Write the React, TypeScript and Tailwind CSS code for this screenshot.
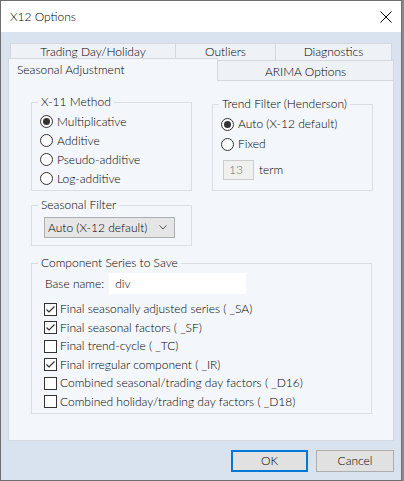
import React from 'react';

const panelBg = 'bg-[#f3f6fa]';

const Radio = ({ checked, label }: { checked?: boolean; label: string }) => (
  <div className="flex items-center h-[20px] gap-[4px]">
    <span className="w-[13px] h-[13px] rounded-full border border-[#333333] bg-white flex items-center justify-center">
      {checked && <span className="w-[7px] h-[7px] rounded-full bg-[#333333]" />}
    </span>
    <span>{label}</span>
  </div>
);

const Check = ({ checked, label }: { checked?: boolean; label: string }) => (
  <div className="flex items-center h-[18.5px] gap-[3px]">
    <span className="w-[13px] h-[13px] border border-[#333333] bg-white flex items-center justify-center">
      {checked && (
        <svg width="11" height="11" viewBox="0 0 11 11">
          <path d="M1.5 5.5 L4 8 L9.5 2.5" fill="none" stroke="#333333" strokeWidth="1.2" />
        </svg>
      )}
    </span>
    <span>{label}</span>
  </div>
);

const GroupLabel = ({ children }: { children: React.ReactNode }) => (
  <div className={`-mt-[9px] ml-[6px] px-[3px] w-fit leading-[16px] ${panelBg}`}>{children}</div>
);

export default function App() {
  return (
    <div className="w-[404px] h-[481px] bg-[#8a8a8a]">
      <div className="w-[402px] h-[481px] border border-[#6e6e6e] flex flex-col font-['Lato',sans-serif] font-light text-[12px] text-black">
        {/* Title bar */}
        <div className="h-[31px] bg-white flex items-center justify-between pl-[9px] pr-[9px]">
          <span>X12 Options</span>
          <svg width="12" height="12" viewBox="0 0 12 12">
            <path d="M0.5 0.5 L11.5 11.5 M11.5 0.5 L0.5 11.5" stroke="#000" strokeWidth="1" />
          </svg>
        </div>

        {/* Body */}
        <div className="flex-1 bg-[#d9e3f0] pt-[11px] pl-[7px] pr-[7px] flex flex-col">
          {/* Tabs row 1 */}
          <div className="flex h-[17px] ml-[2px]">
            <div className="w-[165px] border-t border-l border-[#d4d7db] bg-[#eef1f5] flex items-center justify-center">Trading Day/Holiday</div>
            <div className="w-[100px] border-t border-l border-[#d4d7db] bg-[#eef1f5] flex items-center justify-center">Outliers</div>
            <div className="w-[117px] border-t border-l border-r border-[#d4d7db] bg-[#eef1f5] flex items-center justify-center">Diagnostics</div>
          </div>
          {/* Tabs row 2 */}
          <div className="flex h-[20px] items-end">
            <div className={`relative z-10 w-[210px] h-[23px] -mb-px border-t border-l border-r border-[#d4d7db] ${panelBg} flex items-start pt-[2px] pl-[8px]`}>
              Seasonal Adjustment
            </div>
            <div className="w-[176px] h-[20px] border-t border-r border-[#d4d7db] bg-[#eef1f5] flex items-center justify-center pt-[2px]">
              ARIMA Options
            </div>
          </div>

          {/* Panel */}
          <div className={`w-[386px] h-[361px] border border-[#d4d7db] ${panelBg} pl-[22px] pt-[21px]`}>
            <div className="flex items-start gap-[20px]">
              <div>
                <div className="w-[161px] h-[89px] border border-[#dadde2]">
                  <GroupLabel>X-11 Method</GroupLabel>
                  <div className="mt-[2px] pl-[8px] flex flex-col [&>div]:h-[19px]">
                    <Radio checked label="Multiplicative" />
                    <Radio label="Additive" />
                    <Radio label="Pseudo-additive" />
                    <Radio label="Log-additive" />
                  </div>
                </div>
                <div className="mt-[14px] w-[161px] h-[41px] border border-[#dadde2]">
                  <GroupLabel>Seasonal Filter</GroupLabel>
                  <div className="mt-[4px] ml-[12px] w-[131px] h-[21px] border border-[#adadad] bg-[#e5e5e5] flex items-center justify-between pl-[3px] pr-[7px]">
                    <span>Auto (X-12 default)</span>
                    <svg width="8" height="5" viewBox="0 0 8 5">
                      <path d="M0.5 0.5 L4 4 L7.5 0.5" fill="none" stroke="#555" strokeWidth="1" />
                    </svg>
                  </div>
                </div>
              </div>

              <div className="mt-[2px] w-[161px] h-[87px] border border-[#dadde2]">
                <GroupLabel>Trend Filter (Henderson)</GroupLabel>
                <div className="mt-[2px] pl-[8px] flex flex-col">
                  <Radio checked label="Auto (X-12 default)" />
                  <Radio label="Fixed" />
                </div>
                <div className="mt-[6px] ml-[10px] flex items-center gap-[5px]">
                  <div className="w-[31px] h-[20px] border border-[#cccccc] bg-[#f0f0f0] text-[#6d6d6d] flex items-center pl-[5px]">13</div>
                  <span>term</span>
                </div>
              </div>
            </div>

            <div className="mt-[17px] w-[341px] h-[151px] border border-[#dadde2]">
              <GroupLabel>Component Series to Save</GroupLabel>
              <div className="pl-[12px]">
                <div className="mt-[2px] flex items-center">
                  <span className="ml-[1px]">Base name:</span>
                  <div className="ml-[5px] w-[137px] h-[21px] bg-white flex items-center pl-[6px]">div</div>
                </div>
                <div className="mt-[6px] flex flex-col">
                  <Check checked label="Final seasonally adjusted series ( _SA)" />
                  <Check checked label="Final seasonal factors ( _SF)" />
                  <Check label="Final trend-cycle ( _TC)" />
                  <Check checked label="Final irregular component ( _IR)" />
                  <Check label="Combined seasonal/trading day factors ( _D16)" />
                  <Check label="Combined holiday/trading day factors ( _D18)" />
                </div>
              </div>
            </div>
          </div>

          {/* Buttons */}
          <div className="mt-[9px] flex gap-[8px] pl-[223px]">
            <button className="w-[78px] h-[22px] border-2 border-[#0078d7] bg-[#e1e1e1] flex items-center justify-center">OK</button>
            <button className="w-[79px] h-[22px] border border-[#adadad] bg-[#e1e1e1] flex items-center justify-center">Cancel</button>
          </div>
        </div>
      </div>
    </div>
  );
}
